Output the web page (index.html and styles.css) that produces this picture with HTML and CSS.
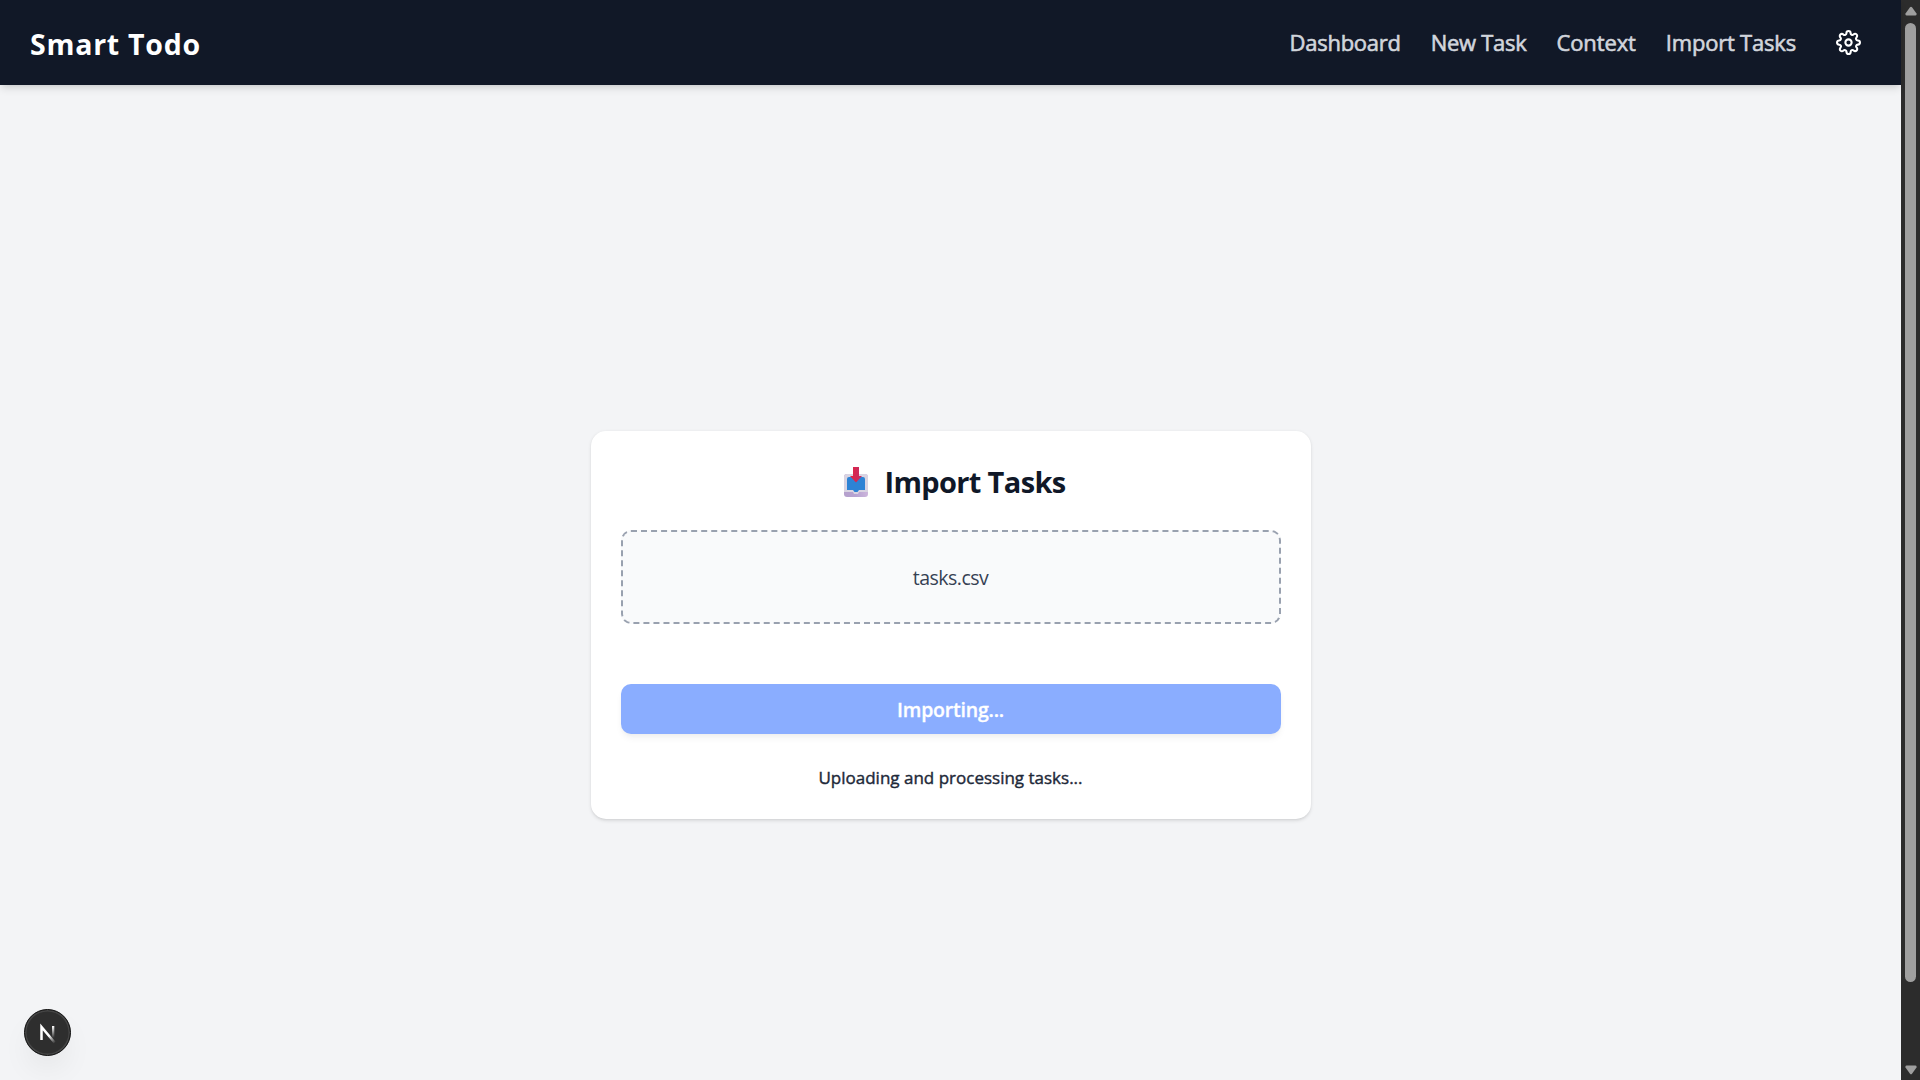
FILE: index.html
```html
<!DOCTYPE html>
<html lang="en">
<head>
<meta charset="utf-8">
<title>Smart Todo</title>
<link rel="stylesheet" href="styles.css">
</head>
<body>
<div class="app">
  <div class="page">
    <header class="header">
      <div class="brand">Smart Todo</div>
      <nav class="nav">
        <a class="link dashboard">Dashboard</a>
        <a class="link new-task">New Task</a>
        <a class="link context">Context</a>
        <a class="link import">Import Tasks</a>
        <svg class="gear" viewBox="0 0 24 24" fill="none" stroke="currentColor" stroke-width="2" stroke-linecap="round" stroke-linejoin="round"><circle cx="12" cy="12" r="3"/><path d="M19.4 15a1.65 1.65 0 0 0 .33 1.82l.06.06a2 2 0 0 1 0 2.83 2 2 0 0 1-2.83 0l-.06-.06a1.65 1.65 0 0 0-1.82-.33 1.65 1.65 0 0 0-1 1.51V21a2 2 0 0 1-2 2 2 2 0 0 1-2-2v-.09A1.65 1.65 0 0 0 9 19.4a1.65 1.65 0 0 0-1.82.33l-.06.06a2 2 0 0 1-2.83 0 2 2 0 0 1 0-2.83l.06-.06a1.65 1.65 0 0 0 .33-1.82 1.65 1.65 0 0 0-1.51-1H3a2 2 0 0 1-2-2 2 2 0 0 1 2-2h.09A1.65 1.65 0 0 0 4.6 9a1.65 1.65 0 0 0-.33-1.82l-.06-.06a2 2 0 0 1 0-2.83 2 2 0 0 1 2.83 0l.06.06a1.65 1.65 0 0 0 1.82.33H9a1.65 1.65 0 0 0 1-1.51V3a2 2 0 0 1 2-2 2 2 0 0 1 2 2v.09a1.65 1.65 0 0 0 1 1.51 1.65 1.65 0 0 0 1.82-.33l.06-.06a2 2 0 0 1 2.83 0 2 2 0 0 1 0 2.83l-.06.06a1.65 1.65 0 0 0-.33 1.82V9a1.65 1.65 0 0 0 1.51 1H21a2 2 0 0 1 2 2 2 2 0 0 1-2 2h-.09a1.65 1.65 0 0 0-1.51 1z"/></svg>
      </nav>
    </header>
    <main class="main">
      <section class="card">
        <h1 class="title">
          <svg class="inbox" viewBox="0 0 24 30">
            <defs>
              <linearGradient id="arrow" x1="0" x2="1"><stop offset="0" stop-color="#e3243f"/><stop offset="1" stop-color="#c32c68"/></linearGradient>
              <linearGradient id="tray" x1="0" x2="1"><stop offset="0" stop-color="#b5a0cc"/><stop offset=".5" stop-color="#b7a3d2"/><stop offset="1" stop-color="#cdb6dc"/></linearGradient>
            </defs>
            <rect x="0" y="7" width="24" height="23" rx="3" fill="url(#tray)"/>
            <path d="M3 7h18a3 3 0 0 1 3 3v15H15l-1 2h-4l-1-2H0V10a3 3 0 0 1 3-3z" fill="#d9d4e2"/>
            <path d="M5 10h14a2 2 0 0 1 2 2v11h-6l-1.500 2h-3L9 23H3V12a2 2 0 0 1 2-2z" fill="#2d83d5"/>
            <path d="M9 0h6v9h3l-6 6.500L6 9h3z" fill="url(#arrow)"/>
          </svg>
          <span class="title-text">Import Tasks</span>
        </h1>
        <div class="dropzone"><span class="file">tasks.csv</span></div>
        <button class="submit"><span class="submit-text">Importing...</span></button>
        <p class="status">Uploading and processing tasks...</p>
      </section>
    </main>
    <div class="badge">
      <svg class="badge-logo" viewBox="0 0 44 44">
        <defs>
          <linearGradient id="stem" x1="0" y1="0" x2="0" y2="1"><stop offset="0" stop-color="#fff"/><stop offset="1" stop-color="#fff" stop-opacity="0"/></linearGradient>
          <linearGradient id="diag" gradientUnits="userSpaceOnUse" x1="25" y1="25" x2="31" y2="32"><stop offset="0" stop-color="#fff"/><stop offset="1" stop-color="#fff" stop-opacity="0"/></linearGradient>
        </defs>
        <path d="M16.500 30V17L30 33" fill="none" stroke="url(#diag)" stroke-width="2.500"/>
        <rect x="27" y="16" width="2.300" height="12" fill="url(#stem)"/>
      </svg>
    </div>
  </div>
  <div class="scrollbar">
    <svg class="arrow" viewBox="0 0 12 10"><path d="M5 1.200Q6 .2 7 1.200L11.500 7.500Q12 9.500 10.500 9.500H1.500Q0 9.500.5 7.500z"/></svg>
    <div class="thumb"></div>
    <svg class="arrow down" viewBox="0 0 12 10"><path d="M5 1.200Q6 .2 7 1.200L11.500 7.500Q12 9.500 10.500 9.500H1.500Q0 9.500.5 7.500z"/></svg>
  </div>
</div>
</body>
</html>
```
FILE: styles.css
```css
* { box-sizing: border-box; }
body {
  margin: 0;
  overflow: hidden;
  font-family: "Open Sans", "Noto Sans", sans-serif;
  background: #f3f4f6;
}
.app { display: flex; height: 1080px; }
.page {
  position: relative;
  flex: 1;
  display: flex;
  flex-direction: column;
}
.header {
  display: flex;
  align-items: center;
  justify-content: space-between;
  height: 85px;
  padding: 0 40px 0 30px;
  background: #111827;
  color: #fff;
  box-shadow: 0 5px 7.5px -1px rgba(0, 0, 0, .1), 0 2.5px 5px -2.5px rgba(0, 0, 0, .1);
}
.brand {
  padding-top: 3px;
  font-size: 28.5px;
  font-weight: 700;
  line-height: 40px;
  letter-spacing: .75px;
}
.nav { display: flex; align-items: center; gap: 30px; }
.link {
  font-size: 22px;
  font-weight: 500;
  line-height: 35px;
  color: #d1d5dc;
  white-space: nowrap;
  -webkit-text-stroke: .6px #d1d5dc;
}
.dashboard { letter-spacing: -.25px; }
.new-task { letter-spacing: -.3px; }
.context { letter-spacing: -.12px; }
.import { letter-spacing: -.2px; }
.gear { width: 25px; height: 25px; margin-left: 10px; }
.main {
  flex: 1;
  display: flex;
  align-items: flex-start;
  justify-content: center;
  padding-top: 346px;
}
.card {
  width: 720px;
  height: 388px;
  padding: 30px;
  border-radius: 15px;
  background: #fff;
  text-align: center;
  box-shadow: 0 1.25px 3.75px rgba(0, 0, 0, .1), 0 1.25px 2.5px -1.25px rgba(0, 0, 0, .1);
}
.title {
  display: flex;
  align-items: center;
  justify-content: center;
  gap: 17px;
  height: 39px;
  margin: 0 0 30px;
  padding: 2px 0 0 8px;
  font-size: 29px;
  font-weight: 700;
  line-height: 40px;
  letter-spacing: -.65px;
  color: #101828;
}
.inbox { width: 24px; height: 30px; }
.dropzone {
  height: 94px;
  padding: 31px 30px 29px;
  border: 2px dashed #99a1af;
  border-radius: 10px;
  background: #f9fafb;
  font-size: 19.5px;
  line-height: 30px;
  letter-spacing: -.5px;
  color: #364153;
}
.submit {
  display: block;
  width: 100%;
  height: 50px;
  margin: 60px 0 30px;
  padding: 2px 0 0;
  border: 0;
  border-radius: 10px;
  background: #8aadff;
  color: #fff;
  font: 600 19.5px/30px "Open Sans", sans-serif;
  letter-spacing: -.2px;
  -webkit-text-stroke: .3px #fff;
  box-shadow: 0 5px 7.5px -1px rgba(0, 0, 0, .05), 0 2.5px 5px -2.5px rgba(0, 0, 0, .05);
}
.status {
  margin: 0;
  padding-top: 1px;
  font-size: 17px;
  font-weight: 500;
  line-height: 25px;
  color: #1e2939;
  -webkit-text-stroke: .4px #1e2939;
}
.badge {
  position: absolute;
  left: 24px;
  bottom: 24px;
  width: 47px;
  height: 47px;
  border-radius: 50%;
  background: #2e2e2e;
  border: 1.500px solid #111;
  box-shadow: inset 0 0 0 1.500px #454545, 0 16px 32px -8px rgba(0, 0, 0, .1);
}
.badge-logo { display: block; width: 44px; height: 44px; }
.scrollbar {
  display: flex;
  flex-direction: column;
  align-items: center;
  width: 19px;
  padding: 6px 0 5px;
  background: #2c2c2c;
}
.arrow { width: 12px; height: 10px; fill: #9f9f9f; }
.thumb { width: 11px; height: 959px; margin: 7px 0 auto; border-radius: 6px; background: #9f9f9f; }
.down { transform: rotate(180deg); }
```
